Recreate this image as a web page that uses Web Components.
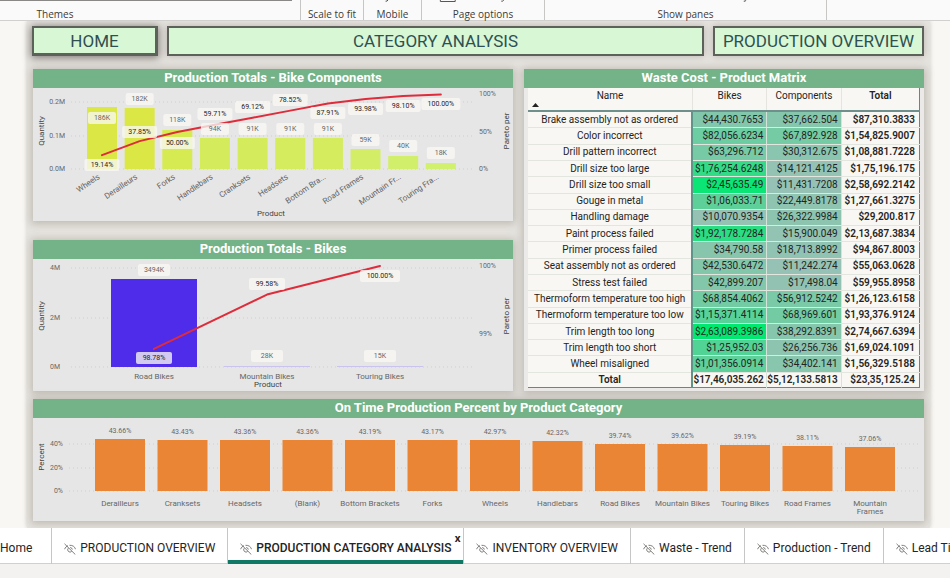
<!DOCTYPE html>
<html lang="en">
<head>
<meta charset="utf-8">
<title>Production Category Analysis</title>
<style>
  body { margin: 0; font-family: Roboto, "Open Sans", sans-serif; color: #252423; background: #f3f2f1; }
</style>
</head>
<body>
<report-app></report-app>

<script>
const define = (name, html, setup) => {
  const template = document.createElement('template');
  template.innerHTML = html;
  customElements.define(name, class extends HTMLElement {
    constructor() {
      super();
      this.attachShadow({ mode: 'open' }).append(template.content.cloneNode(true));
    }
    connectedCallback() {
      if (setup && !this.ready) { this.ready = true; setup(this, this.shadowRoot); }
    }
  });
};

/* ---------- Ribbon ---------- */
define('ribbon-group', `
  <style>
    :host { display: flex; flex-direction: column; justify-content: space-between; align-items: center;
            box-sizing: border-box; flex: none; border-right: 1px solid #c8c6c4;
            font: 10px/12px "Open Sans", sans-serif; color: #3b3a39; }
    ::slotted(svg) { display: block; width: 100%; height: 3px; }
  </style>
  <slot name="controls"></slot><span><slot></slot></span>`);

define('ribbon-bar', `
  <style>
    :host { display: flex; height: 21px; background: #fbfafa; border-bottom: 1px solid #d2d0ce; box-sizing: border-box; }
    ribbon-group { flex-basis: var(--w); }
    .themes { padding-right: 190px; position: relative; }
    .gallery { position: absolute; left: 0; top: 0; width: 292px; height: 1px; background: #8a8886; }
  </style>
  <ribbon-group class="themes" style="--w:301px"><i class="gallery" slot="controls"></i><i slot="controls"></i>Themes</ribbon-group>
  <ribbon-group style="--w:63px"><i slot="controls"></i>Scale to fit</ribbon-group>
  <ribbon-group style="--w:58px"><svg slot="controls" viewBox="0 0 58 3"><path d="M24.500 0q-1 1.500-2.500 1.200" fill="none" stroke="#444"/></svg>Mobile</ribbon-group>
  <ribbon-group style="--w:123px"><svg slot="controls" viewBox="0 0 123 3"><path d="M18.500 0v1.500h15v-1.500" fill="none" stroke="#555"/><path d="M82.500 0q-1 1.500-2.500 1.200" fill="none" stroke="#444"/></svg>Page options</ribbon-group>
  <ribbon-group style="--w:282px"><svg slot="controls" viewBox="0 0 282 3"><path d="M202 0q-1 1.500-2.500 1.200" fill="none" stroke="#444"/></svg>Show panes</ribbon-group>`);

/* ---------- Header buttons ---------- */
define('nav-button', `
  <style>
    :host { display: block; }
    button { display: block; width: 100%; height: 30px; box-sizing: border-box; padding: 0; cursor: pointer;
             background: #d8f7d5; border: 2px solid #5c6259; color: #2f4f52;
             font: 17px/24px Roboto, sans-serif; white-space: nowrap; box-shadow: 0 0 7px rgba(100,80,80,.35); }
    :host([raised]) button { border-right-width: 3px; border-bottom-width: 3px; box-shadow: 0 1px 8px 1px rgba(60,50,50,.6); }
  </style>
  <button type="button"><slot></slot></button>`);

/* ---------- Titled panel ---------- */
define('visual-panel', `
  <style>
    :host { display: flex; flex-direction: column; background: #e6e6e6; min-width: 0;
            box-shadow: 0 1px 8px 2px rgba(110,100,90,.33); }
    h2 { margin: 0; flex: none; background: #74b288; color: #fff; text-align: center;
         font: bold 13px/18px Roboto, sans-serif; padding-bottom: 1px; }
  </style>
  <h2></h2><slot></slot>`, (el, root) => { root.querySelector('h2').textContent = el.getAttribute('heading'); });

/* ---------- Charts ---------- */
const chartStyle = `
  <style>
    :host { display: block; }
    svg { display: block; width: 100%; height: auto; font-family: Roboto, sans-serif; }
    text { font-size: 8px; fill: #666; text-anchor: middle; dominant-baseline: central; }
    .num { font-size: 7px; }
    .pct { fill: #252423; }
    .axis { fill: #444; }
    .start { text-anchor: start; } .end { text-anchor: end; }
    .grid { stroke: #cfcfcf; stroke-width: 1; stroke-dasharray: 1 3; }
    .trend { fill: none; stroke: #de2c3b; stroke-width: 2; stroke-linejoin: round; stroke-linecap: round; }
    .tag { fill: #f8f7f3; fill-opacity: .78; }
  </style>`;
const label = (x, y, s, cls = '') => `<text x="${x}" y="${y}" class="${cls}">${s}</text>`;
const side = (x, y, s) => `<text class="axis" transform="translate(${x} ${y}) rotate(-90)">${s}</text>`;
const tag = (x, y, s, cls, w) => `<rect class="tag" x="${x - w / 2}" y="${y - 6}" width="${w}" height="12" rx="2"/>` + label(x, y, s, 'num ' + cls);
const grid = (x1, x2, y) => `<line class="grid" x1="${x1}" x2="${x2}" y1="${y}" y2="${y}"/>`;

const charts = {
  components: {
    height: 133, base: 81, left: 54, step: 37.65, bar: 30, tilt: true,
    ticks: [['0.2M', 14], ['0.1M', 48], ['0.0M', 81]], right: [['100%', 6], ['50%', 44], ['0%', 81]],
    titleY: 43, product: [238, 125], tagW: 35, valueW: 28, trend: v => 81.5 - v * .75,
    rows: [
      ['Wheels', '186K', 19, 30, 19.14, '19.14%', 77, '#dae745'],
      ['Derailleurs', '182K', 20, 11, 37.85, '37.85%', 44, '#dae745'],
      ['Forks', '118K', 42, 32, 50.00, '50.00%', 55, '#d6ea51'],
      ['Handlebars', '94K', 50, 41, 59.71, '59.71%', 26, '#d4ec5b'],
      ['Cranksets', '91K', 50, 41, 69.12, '69.12%', 19, '#d4ec5c'],
      ['Headsets', '91K', 50, 41, 78.52, '78.52%', 12, '#d4ec5d'],
      ['Bottom Bra...', '91K', 50, 41, 87.91, '87.91%', 25, '#d4ec5e'],
      ['Road Frames', '59K', 61, 52, 93.98, '93.98%', 21, '#d3ee66'],
      ['Mountain Fr...', '40K', 68, 58, 98.10, '98.10%', 18, '#d2ef6b'],
      ['Touring Fra...', '18K', 75, 65, 100, '100.00%', 16, '#d1f06e']
    ]
  },
  bikes: {
    height: 132, base: 108, left: 78, step: 113, bar: 86,
    ticks: [['4M', 9], ['2M', 59], ['0M', 108]], right: [['100%', 7], ['99%', 75]],
    titleY: 57, product: [235, 125], tagW: 36, valueW: 32, labelY: 117, trend: v => 7 + (100 - v) * 68,
    rows: [
      ['Road Bikes', '3494K', 20, 11, 98.78, '98.78%', 99, '#4f2ce9'],
      ['Mountain Bikes', '28K', 107, 97, 99.58, '99.58%', 25, '#c9c3ee'],
      ['Touring Bikes', '15K', 107, 97, 100, '100.00%', 17, '#c9c3ee']
    ]
  }
};

define('pareto-chart', chartStyle + '<svg role="img"></svg>', (el, root) => {
  const c = charts[el.getAttribute('source')];
  const mid = i => c.left + c.bar / 2 + i * c.step;
  const svg = root.querySelector('svg');
  svg.setAttribute('viewBox', `0 0 480 ${c.height}`);
  svg.innerHTML =
    c.ticks.map(([s, y]) => grid(38, 440, y) + label(c.tilt ? 32 : 27, y, s, 'num end')).join('') +
    c.right.map(([s, y]) => label(446, y, s, 'num start')).join('') +
    side(8, c.titleY, 'Quantity') + side(473, c.titleY, 'Pareto per') +
    c.rows.map((r, i) => `<rect x="${c.left + i * c.step}" y="${r[2]}" width="${c.bar}" height="${c.base - r[2]}" fill="${r[7]}"/>`).join('') +
    `<polyline class="trend" points="${c.rows.map((r, i) => mid(i) + ',' + c.trend(r[4])).join(' ')}"/>` +
    c.rows.map((r, i) => tag(mid(i), r[3], r[1], '', c.valueW) + tag(mid(i), r[6], r[5], 'pct', c.tagW + (r[4] === 100 ? 4 : 0))).join('') +
    c.rows.map((r, i) => c.tilt
      ? `<text class="end" transform="translate(${mid(i) - 3} ${c.base + 7}) rotate(-34)">${r[0]}</text>`
      : label(mid(i), c.labelY, r[0])).join('') +
    label(c.product[0], c.product[1], 'Product', 'axis');
});

define('column-chart', chartStyle + '<svg role="img"></svg>', (el, root) => {
  const rows = [['Derailleurs', 43.66], ['Cranksets', 43.43], ['Headsets', 43.36], ['(Blank)', 43.36],
    ['Bottom Brackets', 43.19], ['Forks', 43.17], ['Wheels', 42.97], ['Handlebars', 42.32], ['Road Bikes', 39.74],
    ['Mountain Bikes', 39.62], ['Touring Bikes', 39.19], ['Road Frames', 38.11], ['Mountain|Frames', 37.06]];
  const svg = root.querySelector('svg');
  svg.setAttribute('viewBox', '0 0 891 103');
  svg.innerHTML = [['40%', 26], ['20%', 50], ['0%', 73]].map(([s, y]) => grid(36, 888, y) + label(30, y, s, 'num end')).join('') +
    side(8, 39, 'Percent') +
    rows.map(([name, v], i) => {
      const x = 62 + i * 62.5, top = Math.round(73 - v * 1.18);
      return `<rect x="${x}" y="${top}" width="50" height="${73 - top}" fill="#ea8536"/>` +
        label(x + 25, top - 8, v.toFixed(2) + '%', 'num') +
        name.split('|').map((s, k) => label(x + 25, 85 + k * 8, s)).join('');
    }).join('');
});

/* ---------- Waste cost matrix ---------- */
define('waste-matrix', `
  <style>
    :host { flex: 1; display: grid; padding: 0 4px 3px 4px; background: #eceae8; }
    table { width: 100%; height: 100%; border-collapse: collapse; table-layout: fixed; background: #f8f7f3;
            font: 10px/12px Roboto, sans-serif; border-bottom: 1px solid #6f8481; border-right: 1px solid #6f8481; }
    col.name { width: 42%; } col.val { width: 19%; }
    th, td { padding: 0; font-weight: normal; white-space: nowrap; }
    thead th { height: 20px; vertical-align: top; padding-top: 2px; border-bottom: 2px solid #6f8f8c; border-right: 1px solid #e6e4de; }
    thead th:last-child { border-right: 0; }
    thead button { all: unset; display: block; width: 100%; position: relative; cursor: pointer; }
    thead svg { position: absolute; left: 4px; top: 13px; width: 7px; height: 4px; }
    tbody th, tbody td { height: 15px; border-bottom: 1px solid #e3e6df; }
    tbody th, tfoot th { text-align: center; border-right: 2px solid #5f9488; }
    tfoot th, tfoot td { height: 14px; }
    td { text-align: right; padding-right: 3px; border-right: 1px solid #d5e4da; }
    td:last-child { padding-right: 4px; border-right: 0; }
    .total, tfoot th, tfoot td { font-weight: 600; }
  </style>
  <table>
    <colgroup><col class="name"><col class="val"><col class="val"><col></colgroup>
    <thead><tr><th scope="col"><button type="button">Name<svg viewBox="0 0 7 4" aria-hidden="true"><path d="M3.500 0 7 4H0z" fill="#222"/></svg></button></th>
      <th scope="col">Bikes</th><th scope="col">Components</th><th scope="col" class="total">Total</th></tr></thead>
    <tbody></tbody>
    <tfoot><tr><th scope="row">Total</th><td>$17,46,035.262</td><td>$5,12,133.5813</td><td>$23,35,125.24</td></tr></tfoot>
  </table>`, (el, root) => {
  const rows = [
    ['Brake assembly not as ordered', '$44,430.7653', '$37,662.504', '$87,310.3833'],
    ['Color incorrect', '$82,056.6234', '$67,892.928', '$1,54,825.9007'],
    ['Drill pattern incorrect', '$63,296.712', '$30,312.675', '$1,08,881.7228'],
    ['Drill size too large', '$1,76,254.6248', '$14,121.4125', '$1,75,196.175'],
    ['Drill size too small', '$2,45,635.49', '$11,431.7208', '$2,58,692.2142'],
    ['Gouge in metal', '$1,06,033.71', '$22,449.8178', '$1,27,661.3275'],
    ['Handling damage', '$10,070.9354', '$26,322.9984', '$29,200.817'],
    ['Paint process failed', '$1,92,178.7284', '$15,900.049', '$2,13,687.3834'],
    ['Primer process failed', '$34,790.58', '$18,713.8992', '$94,867.8003'],
    ['Seat assembly not as ordered', '$42,530.6472', '$11,242.274', '$55,063.0628'],
    ['Stress test failed', '$42,899.207', '$17,498.04', '$59,955.8958'],
    ['Thermoform temperature too high', '$68,854.4062', '$56,912.5242', '$1,26,123.6158'],
    ['Thermoform temperature too low', '$1,15,371.4114', '$68,969.601', '$1,93,376.9124'],
    ['Trim length too long', '$2,63,089.3986', '$38,292.8391', '$2,74,667.6394'],
    ['Trim length too short', '$1,25,952.03', '$26,256.736', '$1,69,024.1091'],
    ['Wheel misaligned', '$1,01,356.0914', '$34,402.141', '$1,56,329.5188']];
  const shade = s => {
    const t = (parseFloat(s.replace(/[$,]/g, '')) - 10070) / 253019;
    const mix = (a, b) => Math.round(a + (b - a) * t);
    return `rgb(${mix(150, 0)},${mix(194, 232)},${mix(180, 112)})`;
  };
  root.querySelector('tbody').innerHTML = rows.map(([n, b, c, t]) =>
    `<tr><th scope="row">${n}</th><td style="background:${shade(b)}">${b}</td><td style="background:${shade(c)}">${c}</td><td class="total">${t}</td></tr>`).join('');
});

/* ---------- Page tabs ---------- */
define('page-tab', `
  <style>
    :host { display: block; flex: none; position: relative; border-right: 1px solid #c8c6c4; background: #fff; }
    button { all: unset; display: flex; align-items: center; gap: 4px; box-sizing: border-box; height: 36px;
             padding: 4px 12px 0 12px; font: 12px/16px Roboto, "Open Sans", sans-serif; color: #252423;
             white-space: nowrap; cursor: pointer; border-bottom: 1px solid #d2d0ce; }
    svg { display: block; width: 12px; height: 12px; margin-top: 3px; fill: none; stroke: #605e5c; stroke-width: .8; }
    :host([plain]) svg, .close { display: none; }
    :host([plain]) button { padding-left: 0; padding-right: 19px; }
    :host([active]) button { font-weight: 500; border-bottom: 4px solid #117865; padding-top: 7px; }
    :host([active]) .close { display: block; position: absolute; right: 3px; top: 4px; height: 12px; padding: 0; border: 0; font: bold 10px/12px "Open Sans", sans-serif; }
  </style>
  <button type="button"><svg viewBox="0 0 12 12" aria-hidden="true"><path d="M.5.8 11.300 11.500M.6 6.200C1.300 4.400 2.500 3.300 4 2.700M5.500 2.300C8.500 2.100 10.800 3.600 11.500 6.200M4.300 5.200A2.300 2.300 0 1 0 7.700 8.300M6.200 4.500A2.300 2.300 0 0 1 8.300 6.600"/></svg><span><slot></slot></span></button>
  <button type="button" class="close" aria-label="Close page">x</button>`);

/* ---------- Application ---------- */
define('report-app', `
  <style>
    :host { display: block; }
    .canvas { background: #f8f7f3; padding: 0 20px 0 27px; }
    .page { background: #e6e4df; padding: 5px 6px 7px; box-shadow: 0 0 4px rgba(120,110,100,.3); clip-path: inset(0 -6px); }
    nav { display: grid; grid-template-columns: 126fr 537fr 211fr; gap: 9px; margin: 0 0 13px -1px; }
    main { display: grid; grid-template-columns: 480fr 400fr; column-gap: 11px; row-gap: 8px; }
    .left { display: grid; gap: 19px; }
    .wide { grid-column: 1 / -1; }
    footer { display: flex; overflow: hidden; background: #fff; }
  </style>
  <ribbon-bar></ribbon-bar>
  <div class="canvas"><div class="page">
    <nav><nav-button raised>HOME</nav-button><nav-button>CATEGORY ANALYSIS</nav-button><nav-button>PRODUCTION OVERVIEW</nav-button></nav>
    <main>
      <div class="left">
        <visual-panel heading="Production Totals - Bike Components"><pareto-chart source="components"></pareto-chart></visual-panel>
        <visual-panel heading="Production Totals - Bikes"><pareto-chart source="bikes"></pareto-chart></visual-panel>
      </div>
      <visual-panel heading="Waste Cost - Product Matrix"><waste-matrix></waste-matrix></visual-panel>
      <visual-panel class="wide" heading="On Time Production Percent by Product Category"><column-chart></column-chart></visual-panel>
    </main>
  </div></div>
  <footer>
    <page-tab plain>Home</page-tab><page-tab>PRODUCTION OVERVIEW</page-tab><page-tab active>PRODUCTION CATEGORY ANALYSIS</page-tab>
    <page-tab>INVENTORY OVERVIEW</page-tab><page-tab>Waste - Trend</page-tab><page-tab>Production - Trend</page-tab><page-tab>Lead Ti</page-tab>
  </footer>`);
</script>
</body>
</html>
